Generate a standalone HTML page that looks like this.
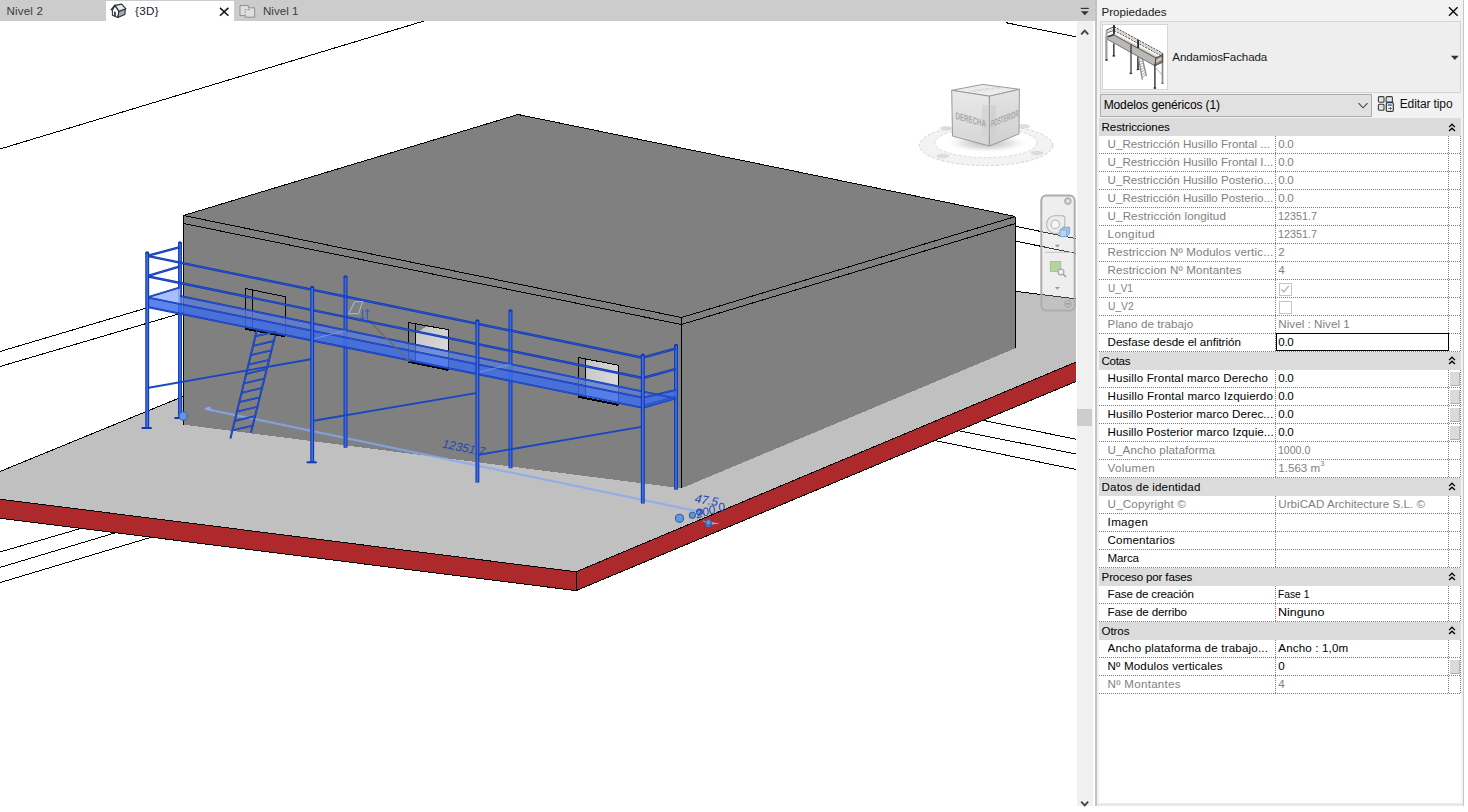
<!DOCTYPE html>
<html><head><meta charset="utf-8"><title>Revit</title>
<style>
html,body{margin:0;padding:0;}
body{width:1468px;height:812px;overflow:hidden;background:#fff;font-family:"Liberation Sans",sans-serif;font-size:11.6px;color:#000;position:relative;}
.abs{position:absolute;}
#tabbar{left:0;top:0;width:1095px;height:21px;background:#cccccc;}
#tabbar .t{position:absolute;top:0;height:21px;line-height:22px;color:#3c3c3c;white-space:nowrap;}
#tab3d{left:106px;top:1px;width:128px;height:20px;background:#fff;}
#view{left:0;top:21px;width:1076px;height:791px;overflow:hidden;background:#fff;}
#view svg{position:absolute;left:0;top:-21px;}
#vscroll{left:1077px;top:21px;width:16px;height:785px;background:#f0f0f0;}
#thumb{left:1077px;top:409px;width:15px;height:16.5px;background:#cdcdcd;}
#split{left:1095px;top:0;width:2px;height:806px;background:#c3c3c3;}
#panel{left:1097px;top:0;width:366px;height:806px;background:#f2f2f2;}
#pr{left:1463px;top:0;width:1.4px;height:806px;background:#c6c6c6;}
#grid{left:1099px;top:118px;width:362px;height:685px;background:#fff;overflow:hidden;}
.hd{position:absolute;left:1099px;width:362px;height:18px;background:#dcdcdc;line-height:18.5px;white-space:nowrap;}
.hd span{position:absolute;left:2.6px;top:0;}
.hd .chev{position:absolute;left:348.8px;top:4.5px;}
.rw{position:absolute;left:1099px;width:362px;height:18px;line-height:15.6px;white-space:nowrap;
  background-image:linear-gradient(90deg,#7c7c7c 50%,transparent 50%);background-size:2px 1px;background-repeat:repeat-x;background-position:0 17px;}
.rw.dis{color:#7f7f7f;}
.rw .nm{position:absolute;left:8.6px;top:0;width:167px;overflow:hidden;}
.rw .vl{position:absolute;left:179.3px;top:0;}
.rw sup{font-size:7.5px;line-height:0;position:relative;top:-1px;vertical-align:super;}
.chk{position:absolute;left:179.8px;top:3.2px;width:11px;height:11px;border:1px solid #c6c6c6;background:#fff;box-sizing:content-box;}
.chk svg{position:absolute;left:.5px;top:.5px;}
.edit{position:absolute;left:176.5px;top:-0.2px;width:171.5px;height:16px;border:1.4px solid #000;box-sizing:content-box;}
.btn{position:absolute;left:351px;top:2px;width:8.5px;height:13px;background:#dadada;border-right:1px solid #b8b8b8;border-bottom:1.5px solid #b0b0b0;box-sizing:content-box;}
.vd{position:absolute;top:135.5px;width:1px;height:558px;background-image:linear-gradient(180deg,#7c7c7c 50%,transparent 50%);background-size:1px 2px;}
</style></head><body>
<div id="tabbar" class="abs">
  <div class="t" style="left:6.5px;letter-spacing:0.168px">Nivel 2</div>
  <div id="tab3d" class="abs"></div>
  <svg class="abs" style="left:104px;top:0px" width="30" height="24" viewBox="0 0 30 24">
    <polygon points="8.4,10.2 11.0,5.6 15.1,11.2 13.7,17.5 8.4,15.3" fill="#fbfbfb" stroke="#2c3038" stroke-width="1.1" stroke-linejoin="round"/>
    <polygon points="15.1,11.2 21.3,9.1 20.9,14.4 13.7,17.5" fill="#a3aab4" stroke="#2c3038" stroke-width="1.1" stroke-linejoin="round"/>
    <polygon points="11.0,5.3 17.6,4.1 21.9,8.8 15.1,11.3" fill="#e6e9ef" stroke="#2c3038" stroke-width="1.2" stroke-linejoin="round"/>
    <path d="M11.0 5.3L7.3 9.7" stroke="#2c3038" stroke-width="1.5" stroke-linecap="round"/>
    <polygon points="10.1,11.6 11.8,12.0 11.8,16.5 10.1,15.8" fill="#2c3038"/>
  </svg>
  <div class="t" style="left:135px;color:#1a1a1a;letter-spacing:0.336px">{3D}</div>
  <svg class="abs" style="left:218px;top:6px" width="12" height="12" viewBox="0 0 12 12"><path d="M2 1.9l8.4 7.8M10.4 1.9L2 9.7" stroke="#111" stroke-width="1.5" fill="none"/></svg>
  <svg class="abs" style="left:239px;top:4px" width="18" height="15" viewBox="0 0 18 15">
    <path d="M1 1.5h8.4v2.3h6.3v9.4H6.2v-1.6H1z" fill="#dedede" stroke="#8f8f8f" stroke-width="1"/>
    <path d="M6.2 11.6V5.6M6.2 5.6h3.2V3.8M9.4 5.6h2.4" fill="none" stroke="#8f8f8f" stroke-width="1" stroke-dasharray="1.5 1.2"/>
  </svg>
  <div class="t" style="left:263px;">Nivel 1</div>
  <svg class="abs" style="left:1079px;top:6px" width="12" height="11" viewBox="0 0 12 11"><path d="M1.8 2.4h8" stroke="#333" stroke-width="1.2"/><path d="M1.9 5.2h7.8L5.8 9.3z" fill="#333"/></svg>
</div>
<div id="view" class="abs">
<svg width="1468" height="812" viewBox="0 0 1468 812">
<defs><linearGradient id="wg" x1="0" y1="0" x2="1" y2="1"><stop offset="0" stop-color="#c4c4c4"/><stop offset="1" stop-color="#e2e2e2"/></linearGradient></defs>
<g shape-rendering="crispEdges">
<line x1="0.0" y1="149.0" x2="430.0" y2="19.2" stroke="#000" stroke-width="1" />
<line x1="1006.0" y1="22.7" x2="1077.0" y2="37.1" stroke="#000" stroke-width="1" />
<line x1="0.0" y1="351.5" x2="147.0" y2="307.9" stroke="#000" stroke-width="1" />
<line x1="0.0" y1="366.5" x2="190.0" y2="310.6" stroke="#000" stroke-width="1" />
<line x1="0.0" y1="552.0" x2="141.0" y2="510.9" stroke="#000" stroke-width="1" />
<line x1="0.0" y1="567.4" x2="176.5" y2="514.5" stroke="#000" stroke-width="1" />
<line x1="0.0" y1="582.6" x2="211.7" y2="519.1" stroke="#000" stroke-width="1" />
<line x1="1000.0" y1="223.1" x2="1077.0" y2="238.9" stroke="#000" stroke-width="1" />
<line x1="1000.0" y1="238.0" x2="1077.0" y2="253.6" stroke="#000" stroke-width="1" />
<line x1="922.6" y1="408.0" x2="1077.0" y2="439.4" stroke="#000" stroke-width="1" />
<line x1="898.8" y1="418.9" x2="1077.0" y2="454.2" stroke="#000" stroke-width="1" />
<line x1="875.0" y1="428.2" x2="1077.0" y2="469.7" stroke="#000" stroke-width="1" />
</g>
<g shape-rendering="crispEdges">
<polygon points="0.0,471.5 183.0,396.5 1015.7,291.3 1077.0,299.0 1077.0,367.6 576.1,577.8 0.0,505.2" fill="#c0c0c0" />
<polygon points="0.0,499.2 576.1,571.8 576.1,590.6 0.0,518.2" fill="#ad292b" />
<polygon points="576.1,571.8 1077.0,361.6 1077.0,381.0 576.1,590.6" fill="#ad292b" />
<line x1="0.0" y1="471.5" x2="183.0" y2="396.5" stroke="#000" stroke-width="1" />
<line x1="1015.7" y1="291.3" x2="1077.0" y2="299.0" stroke="#000" stroke-width="1" />
<line x1="0.0" y1="499.2" x2="576.1" y2="571.8" stroke="#000" stroke-width="1" />
<line x1="576.1" y1="571.8" x2="1077.0" y2="361.6" stroke="#000" stroke-width="1" />
<line x1="0.0" y1="518.2" x2="576.1" y2="590.6" stroke="#000" stroke-width="1" />
<line x1="576.1" y1="590.6" x2="1077.0" y2="381.0" stroke="#000" stroke-width="1" />
<line x1="576.1" y1="571.8" x2="576.1" y2="590.6" stroke="#000" stroke-width="1" />
</g>
<g shape-rendering="crispEdges">
<polygon points="518.0,114.5 1015.5,216.5 1015.5,348.2 681.5,488.3 183.5,424.7 183.5,215.5" fill="#808080" />
<line x1="183.5" y1="215.5" x2="518.0" y2="114.5" stroke="#000" stroke-width="1" />
<line x1="518.0" y1="114.5" x2="1015.5" y2="216.5" stroke="#000" stroke-width="1" />
<line x1="1015.5" y1="216.5" x2="681.5" y2="317.5" stroke="#000" stroke-width="1" />
<line x1="681.5" y1="317.5" x2="183.5" y2="215.5" stroke="#000" stroke-width="1" />
<line x1="183.5" y1="223.5" x2="681.5" y2="324.5" stroke="#000" stroke-width="1" />
<line x1="681.5" y1="324.5" x2="1015.5" y2="223.5" stroke="#000" stroke-width="1" />
<line x1="183.5" y1="215.5" x2="183.5" y2="424.7" stroke="#000" stroke-width="1" />
<line x1="681.5" y1="317.5" x2="681.5" y2="488.3" stroke="#000" stroke-width="1" />
<line x1="1015.5" y1="216.5" x2="1015.5" y2="348.2" stroke="#000" stroke-width="1" />
<line x1="245.5" y1="288.5" x2="285.5" y2="296.8" stroke="#000" stroke-width="1" /><line x1="245.5" y1="288.5" x2="245.5" y2="328.8" stroke="#000" stroke-width="1" /><line x1="252.5" y1="290.0" x2="252.5" y2="330.1" stroke="#000" stroke-width="1" /><line x1="285.5" y1="296.8" x2="285.5" y2="336.4" stroke="#000" stroke-width="1" /><line x1="245.5" y1="328.8" x2="285.5" y2="336.4" stroke="#000" stroke-width="2" />
<polygon points="415.5,333.8 426.0,326.6 448.5,329.7 448.5,369.9 415.5,363.1" fill="url(#wg)" /><line x1="408.5" y1="322.5" x2="448.5" y2="329.7" stroke="#000" stroke-width="1" /><line x1="408.5" y1="322.5" x2="408.5" y2="361.7" stroke="#000" stroke-width="1" /><line x1="415.5" y1="323.8" x2="415.5" y2="363.1" stroke="#000" stroke-width="1" /><line x1="448.5" y1="329.7" x2="448.5" y2="369.9" stroke="#000" stroke-width="1" /><line x1="408.5" y1="361.7" x2="448.5" y2="369.9" stroke="#000" stroke-width="2" />
<polygon points="585.5,358.9 618.5,365.3 618.5,404.9 585.5,398.1" fill="url(#wg)" /><line x1="578.5" y1="357.5" x2="618.5" y2="365.3" stroke="#000" stroke-width="1" /><line x1="578.5" y1="357.5" x2="578.5" y2="396.7" stroke="#000" stroke-width="1" /><line x1="585.5" y1="358.9" x2="585.5" y2="398.1" stroke="#000" stroke-width="1" /><line x1="618.5" y1="365.3" x2="618.5" y2="404.9" stroke="#000" stroke-width="1" /><line x1="578.5" y1="396.7" x2="618.5" y2="404.9" stroke="#000" stroke-width="2" />
</g>
<line x1="205.0" y1="408.8" x2="701.0" y2="512.0" stroke="#86a8f4" stroke-width="2.2" stroke-opacity="0.78"/>
<polygon points="204.0,408.2 210.0,406.5 212.0,410.5" fill="#86a8f4" />
<line x1="180.0" y1="242.5" x2="180.0" y2="417.8" stroke="#1038b2" stroke-width="3.9" /><circle cx="180" cy="243.1" r="1.95" fill="#1038b2"/><line x1="180.0" y1="243.5" x2="180.0" y2="417.8" stroke="#3f6fe4" stroke-width="1.7" />
<line x1="345.5" y1="276.5" x2="345.5" y2="447.8" stroke="#1038b2" stroke-width="3.9" /><circle cx="345.5" cy="277.1" r="1.95" fill="#1038b2"/><line x1="345.5" y1="277.5" x2="345.5" y2="447.8" stroke="#3f6fe4" stroke-width="1.7" />
<line x1="510.5" y1="310.5" x2="510.5" y2="468.2" stroke="#1038b2" stroke-width="3.9" /><circle cx="510.5" cy="311.1" r="1.95" fill="#1038b2"/><line x1="510.5" y1="311.5" x2="510.5" y2="468.2" stroke="#3f6fe4" stroke-width="1.7" />
<line x1="676.0" y1="345.0" x2="676.0" y2="489.6" stroke="#1038b2" stroke-width="3.9" /><circle cx="676" cy="345.6" r="1.95" fill="#1038b2"/><line x1="676.0" y1="346.0" x2="676.0" y2="489.6" stroke="#3f6fe4" stroke-width="1.7" />
<polygon points="180.0,296.0 643.0,390.3 657.0,394.3 643.0,397.7 180.0,303.9" fill="rgba(93,124,212,0.80)" />
<polygon points="147.2,297.3 180.0,287.3 180.0,303.9" fill="rgba(150,180,250,0.85)" />
<polygon points="147.2,297.3 642.8,397.7 642.8,407.8 147.2,307.0" fill="rgba(61,109,232,0.84)" />
<polygon points="642.8,397.7 676.0,389.8 676.0,398.5 642.8,407.8" fill="rgba(61,109,232,0.84)" />
<line x1="180.0" y1="296.0" x2="676.0" y2="398.3" stroke="#1038b2" stroke-width="1.8" /><line x1="180.0" y1="296.0" x2="676.0" y2="398.3" stroke="#3360d8" stroke-width="0.7" />
<line x1="147.2" y1="297.3" x2="642.8" y2="397.7" stroke="#1038b2" stroke-width="1.8" /><line x1="147.2" y1="297.3" x2="642.8" y2="397.7" stroke="#3360d8" stroke-width="0.7" />
<line x1="147.2" y1="307.0" x2="642.8" y2="407.8" stroke="#1038b2" stroke-width="1.8" /><line x1="147.2" y1="307.0" x2="642.8" y2="407.8" stroke="#3360d8" stroke-width="0.7" />
<line x1="147.2" y1="297.3" x2="180.0" y2="287.3" stroke="#1038b2" stroke-width="1.8" /><line x1="147.2" y1="297.3" x2="180.0" y2="287.3" stroke="#3360d8" stroke-width="0.7" />
<line x1="642.8" y1="397.7" x2="676.0" y2="389.8" stroke="#1038b2" stroke-width="1.8" /><line x1="642.8" y1="397.7" x2="676.0" y2="389.8" stroke="#3360d8" stroke-width="0.7" />
<line x1="642.8" y1="407.8" x2="676.0" y2="398.5" stroke="#1038b2" stroke-width="1.8" /><line x1="642.8" y1="407.8" x2="676.0" y2="398.5" stroke="#3360d8" stroke-width="0.7" />
<line x1="642.8" y1="405.5" x2="676.0" y2="396.5" stroke="#1038b2" stroke-width="1.2" /><line x1="642.8" y1="405.5" x2="676.0" y2="396.5" stroke="#3360d8" stroke-width="0.7" />
<line x1="368.5" y1="320.0" x2="409.8" y2="361.8" stroke="#6a6a6a" stroke-width="1.5" stroke-opacity="0.9"/>
<line x1="312.2" y1="339.1" x2="345.5" y2="330.7" stroke="#86a2e6" stroke-width="1" stroke-opacity="0.75"/>
<line x1="477.4" y1="372.7" x2="510.5" y2="364.3" stroke="#86a2e6" stroke-width="1" stroke-opacity="0.75"/>
<line x1="147.2" y1="255.9" x2="642.8" y2="357.7" stroke="#1038b2" stroke-width="2.4" /><line x1="147.2" y1="255.9" x2="642.8" y2="357.7" stroke="#3360d8" stroke-width="0.7" />
<line x1="147.2" y1="276.2" x2="642.8" y2="378.0" stroke="#1038b2" stroke-width="2.4" /><line x1="147.2" y1="276.2" x2="642.8" y2="378.0" stroke="#3360d8" stroke-width="0.7" />
<line x1="147.2" y1="255.9" x2="180.0" y2="247.2" stroke="#1038b2" stroke-width="2.4" /><line x1="147.2" y1="255.9" x2="180.0" y2="247.2" stroke="#3360d8" stroke-width="0.7" />
<line x1="147.2" y1="276.2" x2="180.0" y2="266.3" stroke="#1038b2" stroke-width="2.4" /><line x1="147.2" y1="276.2" x2="180.0" y2="266.3" stroke="#3360d8" stroke-width="0.7" />
<line x1="642.8" y1="357.7" x2="676.0" y2="348.5" stroke="#1038b2" stroke-width="2.4" /><line x1="642.8" y1="357.7" x2="676.0" y2="348.5" stroke="#3360d8" stroke-width="0.7" />
<line x1="642.8" y1="378.0" x2="676.0" y2="368.8" stroke="#1038b2" stroke-width="2.4" /><line x1="642.8" y1="378.0" x2="676.0" y2="368.8" stroke="#3360d8" stroke-width="0.7" />
<line x1="147.2" y1="388.0" x2="312.2" y2="359.0" stroke="#1848c0" stroke-width="1.8" />
<line x1="312.2" y1="421.0" x2="477.4" y2="392.8" stroke="#1848c0" stroke-width="1.8" />
<line x1="477.4" y1="455.0" x2="642.8" y2="426.6" stroke="#1848c0" stroke-width="1.8" />
<line x1="256.8" y1="330.4" x2="230.4" y2="438.4" stroke="#1038b2" stroke-width="2" /><line x1="256.8" y1="330.4" x2="230.4" y2="438.4" stroke="#3360d8" stroke-width="0.7" />
<line x1="275.2" y1="335.2" x2="250.9" y2="432.8" stroke="#1038b2" stroke-width="2" /><line x1="275.2" y1="335.2" x2="250.9" y2="432.8" stroke="#3360d8" stroke-width="0.7" />
<line x1="232.4" y1="430.4" x2="252.7" y2="425.6" stroke="#1038b2" stroke-width="1.8" /><line x1="232.4" y1="430.4" x2="252.7" y2="425.6" stroke="#3360d8" stroke-width="0.7" />
<line x1="234.7" y1="421.0" x2="255.0" y2="416.2" stroke="#1038b2" stroke-width="1.8" /><line x1="234.7" y1="421.0" x2="255.0" y2="416.2" stroke="#3360d8" stroke-width="0.7" />
<line x1="237.0" y1="411.6" x2="257.4" y2="406.8" stroke="#1038b2" stroke-width="1.8" /><line x1="237.0" y1="411.6" x2="257.4" y2="406.8" stroke="#3360d8" stroke-width="0.7" />
<line x1="239.2" y1="402.2" x2="259.7" y2="397.4" stroke="#1038b2" stroke-width="1.8" /><line x1="239.2" y1="402.2" x2="259.7" y2="397.4" stroke="#3360d8" stroke-width="0.7" />
<line x1="241.5" y1="392.8" x2="262.1" y2="388.0" stroke="#1038b2" stroke-width="1.8" /><line x1="241.5" y1="392.8" x2="262.1" y2="388.0" stroke="#3360d8" stroke-width="0.7" />
<line x1="243.8" y1="383.4" x2="264.4" y2="378.6" stroke="#1038b2" stroke-width="1.8" /><line x1="243.8" y1="383.4" x2="264.4" y2="378.6" stroke="#3360d8" stroke-width="0.7" />
<line x1="246.1" y1="374.0" x2="266.7" y2="369.2" stroke="#1038b2" stroke-width="1.8" /><line x1="246.1" y1="374.0" x2="266.7" y2="369.2" stroke="#3360d8" stroke-width="0.7" />
<line x1="248.4" y1="364.6" x2="269.1" y2="359.8" stroke="#1038b2" stroke-width="1.8" /><line x1="248.4" y1="364.6" x2="269.1" y2="359.8" stroke="#3360d8" stroke-width="0.7" />
<line x1="250.7" y1="355.2" x2="271.4" y2="350.4" stroke="#1038b2" stroke-width="1.8" /><line x1="250.7" y1="355.2" x2="271.4" y2="350.4" stroke="#3360d8" stroke-width="0.7" />
<line x1="253.0" y1="345.8" x2="273.8" y2="341.0" stroke="#1038b2" stroke-width="1.8" /><line x1="253.0" y1="345.8" x2="273.8" y2="341.0" stroke="#3360d8" stroke-width="0.7" />
<line x1="255.3" y1="336.4" x2="276.1" y2="331.6" stroke="#1038b2" stroke-width="1.8" /><line x1="255.3" y1="336.4" x2="276.1" y2="331.6" stroke="#3360d8" stroke-width="0.7" />
<line x1="147.2" y1="252.5" x2="147.2" y2="427.8" stroke="#1038b2" stroke-width="3.9" /><circle cx="147.2" cy="253.1" r="1.95" fill="#1038b2"/><line x1="147.2" y1="253.5" x2="147.2" y2="427.8" stroke="#3f6fe4" stroke-width="1.7" />
<line x1="312.2" y1="287.0" x2="312.2" y2="462.0" stroke="#1038b2" stroke-width="3.9" /><circle cx="312.2" cy="287.6" r="1.95" fill="#1038b2"/><line x1="312.2" y1="288.0" x2="312.2" y2="462.0" stroke="#3f6fe4" stroke-width="1.7" />
<line x1="477.4" y1="320.5" x2="477.4" y2="482.6" stroke="#1038b2" stroke-width="3.9" /><circle cx="477.4" cy="321.1" r="1.95" fill="#1038b2"/><line x1="477.4" y1="321.5" x2="477.4" y2="482.6" stroke="#3f6fe4" stroke-width="1.7" />
<line x1="642.8" y1="354.8" x2="642.8" y2="503.5" stroke="#1038b2" stroke-width="3.9" /><circle cx="642.8" cy="355.40000000000003" r="1.95" fill="#1038b2"/><line x1="642.8" y1="355.8" x2="642.8" y2="503.5" stroke="#3f6fe4" stroke-width="1.7" />
<line x1="141.7" y1="428.0" x2="151.7" y2="428.0" stroke="#1038b2" stroke-width="2" />
<line x1="174.5" y1="418.0" x2="184.5" y2="418.0" stroke="#1038b2" stroke-width="2" />
<line x1="306.7" y1="462.3" x2="316.7" y2="462.3" stroke="#1038b2" stroke-width="2" />
<polygon points="354.7,301.7 362.6,301.7 358.6,313.6 348.8,313.6" fill="none" stroke="#8fb4e0" stroke-width="1.2"/>
<path d="M362.6 309.5V319.5M360.6 317.3l2 2.4 2-2.4M367.4 319.5V309.5M365.4 311.8l2-2.4 2 2.4" stroke="#2a5bc4" stroke-width="1" fill="none"/>
<text x="441.8" y="447.6" transform="rotate(11 441.8 447.6)" font-family="Liberation Sans, sans-serif" font-style="italic" font-size="12" fill="#1f45b8">12351.7</text>
<text x="694.3" y="502.3" transform="rotate(9.5 694.3 502.3)" font-family="Liberation Sans, sans-serif" font-style="italic" font-size="12" fill="#1f45b8">47.5</text>
<polygon points="702.0,520.6 720.0,523.4 709.0,525.0" fill="#a9a0e4" />
<circle cx="183.2" cy="416" r="4.2" fill="#5e98e2" stroke="#3b5f9e" stroke-width="1.1"/>
<circle cx="679.5" cy="518.3" r="4.1" fill="#5e98e2" stroke="#3b5f9e" stroke-width="1.1"/>
<circle cx="692.4" cy="515.2" r="3" fill="#5e98e2" stroke="#3b5f9e" stroke-width="1.1"/>
<circle cx="699.5" cy="512.1" r="3" fill="#5e98e2" stroke="#3b5f9e" stroke-width="1.1"/>
<circle cx="708.4" cy="524.2" r="2.8" fill="#5e98e2" stroke="#3b5f9e" stroke-width="1.1"/>
<circle cx="708.4" cy="522.4" r="2.8" fill="#5e98e2" stroke="#3b5f9e" stroke-width="1.1"/>
<text x="697" y="518.6" transform="rotate(-16.5 697 518.6)" font-family="Liberation Sans, sans-serif" font-style="italic" font-size="12" fill="#1f45b8">200.0</text>
<defs><radialGradient id="shd"><stop offset="0" stop-color="#9a9a9a" stop-opacity=".75"/><stop offset=".6" stop-color="#c8c8c8" stop-opacity=".45"/><stop offset="1" stop-color="#fff" stop-opacity="0"/></radialGradient><linearGradient id="fL" x1="0" y1="0" x2="0" y2="1"><stop offset="0" stop-color="#e9e9e9"/><stop offset="1" stop-color="#d6d6d6"/></linearGradient><linearGradient id="fR" x1="0" y1="0" x2="0" y2="1"><stop offset="0" stop-color="#e4e4e4"/><stop offset="1" stop-color="#cfcfcf"/></linearGradient></defs>
<ellipse cx="986" cy="145.3" rx="66.7" ry="20.3" fill="#f3f3f3" stroke="#d2d2d2" stroke-width="1" stroke-dasharray="3 2"/>
<ellipse cx="986" cy="142.8" rx="51" ry="14.8" fill="#fff" stroke="#dcdcdc" stroke-width="1" stroke-dasharray="3 2"/>
<ellipse cx="987" cy="143" rx="42" ry="10" fill="url(#shd)"/>
<ellipse cx="946" cy="128.3" rx="6.5" ry="2.2" fill="#d6d6d6" opacity=".8"/>
<ellipse cx="1024" cy="126.3" rx="6.5" ry="2.2" fill="#d6d6d6" opacity=".8"/>
<ellipse cx="943" cy="156" rx="6.5" ry="2.2" fill="#d6d6d6" opacity=".8"/>
<ellipse cx="1037" cy="153" rx="6.5" ry="2.2" fill="#d6d6d6" opacity=".8"/>
<polygon points="951.7,90.3 982.8,84.4 1019.4,89.3 989.4,96.2" fill="#ececec" stroke="#9a9a9a" stroke-width="1"/>
<polygon points="951.7,90.3 989.4,96.2 989.4,146 952.5,136.1" fill="url(#fL)" stroke="#9a9a9a" stroke-width="1"/>
<polygon points="989.4,96.2 1019.4,89.3 1019,133.9 989.4,146" fill="url(#fR)" stroke="#9a9a9a" stroke-width="1"/>
<rect x="982" y="105" width="6" height="32" fill="#d2d2d2" opacity=".7"/><rect x="991" y="105" width="5" height="30" fill="#cdcdcd" opacity=".7"/>
<text transform="matrix(1 .27 0 1 955.5 112)" font-family="Liberation Sans, sans-serif" font-weight="bold" font-size="10" fill="#a6a6a6" textLength="30.5" lengthAdjust="spacingAndGlyphs" x="0" y="7">DERECHA</text>
<text transform="matrix(1 -.40 0 1 991 127.5)" font-family="Liberation Sans, sans-serif" font-weight="bold" font-size="10" fill="#a6a6a6" textLength="27.5" lengthAdjust="spacingAndGlyphs" x="0" y="0">POSTERIOR</text>
<text transform="matrix(1 -.12 .9 .35 972 92)" font-family="Liberation Sans, sans-serif" font-size="6" fill="#c4c4c4" x="0" y="0">SUPERIOR</text>
<rect x="1041.3" y="195.6" width="33.4" height="114.8" rx="5" ry="5" fill="rgba(200,200,200,0.3)" stroke="#adadad" stroke-width="2"/>
<circle cx="1067.9" cy="201.1" r="3.3" fill="#c6c6c6" stroke="#a6a6a6" stroke-width="1"/><path d="M1066.4 199.6l3 3M1069.4 199.6l-3 3" stroke="#f4f4f4" stroke-width="1"/>
<circle cx="1067.9" cy="303.9" r="3.3" fill="#c6c6c6" stroke="#a0a0a0" stroke-width="1"/><path d="M1066 303.9h3.8" stroke="#8a8a8a" stroke-width="1.2"/>
<path d="M1046.5 224.4a8.8 8.8 0 0 1 8.8-8.8h6.5a3 3 0 0 1 3 3v5.8a9.2 9.2 0 0 1-9.2 9.2a9.1 9.1 0 0 1-9.1-9.2z" fill="#ececec" stroke="#bdbdbd" stroke-width="1.3"/>
<circle cx="1055.3" cy="224.4" r="4.2" fill="#f6f6f6" stroke="#bdbdbd" stroke-width="1.2"/>
<polygon points="1060,230 1063,227.2 1069.6,227.2 1069.6,233.6 1066.6,236.6 1060,236.6" fill="#9ec0ea" stroke="#6f9ad2" stroke-width="0.8"/><polygon points="1060,230 1066.6,230 1066.6,236.6 1060,236.6" fill="#b9d3f2" stroke="#6f9ad2" stroke-width="0.6"/>
<polygon points="1054.9,244.8 1059.9,244.8 1057.4,247.6" fill="#9a9a9a"/>
<line x1="1045" y1="252.3" x2="1072" y2="252.3" stroke="#c4c4c4" stroke-width="1"/>
<rect x="1050.3" y="261.5" width="10.5" height="10" fill="#b4d3a0" stroke="#9cc088" stroke-width="0.8"/>
<circle cx="1061" cy="272" r="2.9" fill="#efefef" stroke="#a8a8a8" stroke-width="1.2"/><line x1="1063.2" y1="274.2" x2="1066" y2="277" stroke="#a0a0a0" stroke-width="1.6"/>
<polygon points="1054.9,287 1059.9,287 1057.4,289.8" fill="#9a9a9a"/>
</svg>
</div>
<div id="vscroll" class="abs"></div>
<div id="thumb" class="abs"></div>
<svg class="abs" style="left:1079px;top:27px" width="12" height="10" viewBox="0 0 12 10"><path d="M2.2 7.4L5.7 3.7 9.2 7.4" fill="none" stroke="#444" stroke-width="1.9"/></svg>
<svg class="abs" style="left:1079px;top:798.6px" width="12" height="10" viewBox="0 0 12 10"><path d="M2.2 2.6L5.7 6.3 9.2 2.6" fill="none" stroke="#444" stroke-width="1.9"/></svg>
<div id="split" class="abs"></div>
<div id="panel" class="abs"></div>
<div id="pr" class="abs"></div>
<div class="abs" style="left:1101.5px;top:4px;line-height:15px;color:#1a1a1a">Propiedades</div>
<svg class="abs" style="left:1447px;top:5px" width="13" height="13" viewBox="0 0 13 13"><path d="M2 2.2l8.6 8.6M10.6 2.2L2 10.8" stroke="#111" stroke-width="1.5" fill="none"/></svg>
<div class="abs" style="left:1099.5px;top:21px;width:359px;height:69.5px;border:1px solid #d4d4d4;background:#eeeeee;box-sizing:content-box"></div>
<div class="abs" style="left:1101.7px;top:23.7px;width:64.5px;height:64px;border:1px solid #d6d6d6;background:#fff;box-sizing:content-box"></div>
<svg class="abs" style="left:1102.4px;top:24.4px" width="65" height="65" viewBox="0 0 65 65">
<line x1="11.8" y1="19.5" x2="11.8" y2="31.9" stroke="#3a3a3a" stroke-width="1.5" />
<ellipse cx="11.8" cy="31.9" rx="1.5" ry=".8" fill="#333"/>
<line x1="36.0" y1="32.6" x2="36.0" y2="45.5" stroke="#2e2e2e" stroke-width="1.6" />
<ellipse cx="36.0" cy="45.5" rx="1.5" ry=".8" fill="#333"/>
<line x1="60.5" y1="30.7" x2="60.5" y2="59.3" stroke="#8a8a8a" stroke-width="1.7" />
<ellipse cx="60.5" cy="59.3" rx="1.5" ry=".8" fill="#777"/>
<line x1="36.2" y1="32.6" x2="40.4" y2="55.6" stroke="#8a8a8a" stroke-width="1.3" />
<line x1="39.9" y1="32.6" x2="44.4" y2="52.1" stroke="#8a8a8a" stroke-width="1.3" />
<line x1="36.8" y1="35.3" x2="40.7" y2="34.4" stroke="#9c9c9c" stroke-width="0.9" />
<line x1="37.3" y1="37.9" x2="41.1" y2="36.7" stroke="#9c9c9c" stroke-width="0.9" />
<line x1="37.8" y1="40.5" x2="41.6" y2="39.0" stroke="#9c9c9c" stroke-width="0.9" />
<line x1="38.2" y1="43.1" x2="42.1" y2="41.3" stroke="#9c9c9c" stroke-width="0.9" />
<line x1="38.7" y1="45.7" x2="42.5" y2="43.6" stroke="#9c9c9c" stroke-width="0.9" />
<line x1="39.2" y1="48.3" x2="43.0" y2="45.9" stroke="#9c9c9c" stroke-width="0.9" />
<line x1="39.7" y1="50.8" x2="43.5" y2="48.3" stroke="#9c9c9c" stroke-width="0.9" />
<line x1="40.2" y1="53.4" x2="43.9" y2="50.6" stroke="#9c9c9c" stroke-width="0.9" />
<line x1="12.0" y1="2.8" x2="60.6" y2="29.3" stroke="#3c3c3c" stroke-width="1.0" stroke-dasharray="2.2 1"/>
<line x1="12.0" y1="6.4" x2="60.6" y2="32.5" stroke="#4a4a4a" stroke-width="1.0" stroke-dasharray="2.2 1"/>
<line x1="12.0" y1="4.6" x2="60.6" y2="30.9" stroke="#cfcfcf" stroke-width="1.4" />
<line x1="4.6" y1="5.9" x2="12.0" y2="2.8" stroke="#555" stroke-width="1.0" />
<line x1="4.6" y1="9.0" x2="12.0" y2="6.4" stroke="#666" stroke-width="1.0" />
<line x1="4.6" y1="7.5" x2="12.0" y2="4.6" stroke="#cfcfcf" stroke-width="1.2" />
<polygon points="12.0,9.2 57.4,33.1 56.8,35.8 11.5,11.4" fill="#d6cbbd" />
<line x1="12.0" y1="9.2" x2="57.4" y2="33.1" stroke="#f0ebe4" stroke-width="1.0" />
<line x1="11.7" y1="11.4" x2="56.8" y2="35.8" stroke="#6e5a48" stroke-width="1.1" />
<polygon points="5.3,13.1 11.8,11.1 53.8,34.0 52.9,41.9 5.3,15.3" fill="#b9b9b9" stroke="#4a4a4a" stroke-width="0.7"/>
<line x1="5.0" y1="12.9" x2="12.0" y2="10.5" stroke="#3a3028" stroke-width="1.4" />
<polygon points="53.8,33.8 60.4,30.8 60.4,38.4 53.1,41.7" fill="#8c7f74" stroke="#3a3028" stroke-width="0.7"/>
<polygon points="54.4,35.5 59.7,33.0 59.7,36.1 54.1,39.0" fill="#cfc8c0" />
<line x1="12.0" y1="1.1" x2="12.0" y2="10.3" stroke="#1e1e1e" stroke-width="1.7" />
<line x1="36.1" y1="15.7" x2="36.1" y2="24.1" stroke="#1e1e1e" stroke-width="1.7" />
<line x1="60.4" y1="29.0" x2="60.4" y2="33.7" stroke="#555" stroke-width="1.5" />
<line x1="4.6" y1="5.9" x2="4.6" y2="36.1" stroke="#a8a8a8" stroke-width="2.0" />
<line x1="3.8" y1="12.4" x2="3.8" y2="35.5" stroke="#8a8a8a" stroke-width="0.7" />
<ellipse cx="4.5" cy="36.1" rx="1.5" ry=".8" fill="#2a2a2a"/>
<line x1="29.0" y1="20.5" x2="29.0" y2="49.2" stroke="#3c3c3c" stroke-width="1.3" />
<ellipse cx="28.9" cy="49.4" rx="1.5" ry=".8" fill="#444"/>
<line x1="52.9" y1="39.9" x2="52.9" y2="64.0" stroke="#4a4a4a" stroke-width="1.6" />
<ellipse cx="52.9" cy="64.1" rx="1.5" ry=".8" fill="#222"/>
<line x1="53.6" y1="43.6" x2="60.3" y2="51.0" stroke="#9a9a9a" stroke-width="0.8" />
</svg>
<div class="abs" style="left:1172.3px;top:49.2px;line-height:15px;color:#1a1a1a;letter-spacing:-0.123px">AndamiosFachada</div>
<svg class="abs" style="left:1450px;top:55px" width="10" height="6" viewBox="0 0 10 6"><path d="M.8 .8h8L4.8 5z" fill="#333"/></svg>
<div class="abs" style="left:1099.5px;top:94px;width:270px;height:21px;border:1px solid #adadad;background:#e1e1e1;box-sizing:content-box"></div>
<div class="abs" style="left:1103.7px;top:98.2px;line-height:15px;font-size:12px;letter-spacing:-0.122px">Modelos genéricos (1)</div>
<svg class="abs" style="left:1357px;top:101px" width="12" height="9" viewBox="0 0 12 9"><path d="M1.5 2.2L6 6.8 10.5 2.2" fill="none" stroke="#444" stroke-width="1.1"/></svg>
<svg class="abs" style="left:1377px;top:95px" width="18" height="18" viewBox="0 0 18 18">
  <rect x="1.4" y="1.6" width="5.6" height="5.6" rx="1" fill="#e4e4e4" stroke="#3a3a3a" stroke-width="1.1"/>
  <rect x="1.4" y="9.2" width="5.6" height="6" rx="1" fill="#e4e4e4" stroke="#3a3a3a" stroke-width="1.1"/>
  <path d="M9.2 7V2.6a1 1 0 0 1 1-1h4.2a1 1 0 0 1 1 1V7z" fill="#e4e4e4" stroke="#3a3a3a" stroke-width="1.1"/>
  <rect x="9.3" y="7.6" width="7" height="8.8" rx="1.2" fill="#fcfcfc" stroke="#2e3440" stroke-width="1.2"/>
  <path d="M10.8 10.1h4" stroke="#2b62b8" stroke-width="1.5"/><path d="M11 13.4h3.4M13.2 12.2l1.3 1.2-1.3 1.2" stroke="#2e3440" stroke-width=".8" fill="none"/>
</svg>
<div class="abs" style="left:1399.7px;top:96.7px;line-height:15px;font-size:12px;color:#111;letter-spacing:-0.113px">Editar tipo</div>
<div id="grid" class="abs"></div>
<div class="abs" style="left:1097px;top:803px;width:366px;height:3px;background:#e9e9e9"></div>
<div class="vd" style="left:1275px"></div>
<div class="vd" style="left:1448px"></div>
<div class="vd" style="left:1460px"></div>
<div class="hd" style="top:118px"><span style="letter-spacing:-0.116px">Restricciones</span><svg class="chev" width="8" height="9" viewBox="0 0 9 10"><path d="M1.2 4.6L4.5 1.4 7.8 4.6M1.2 9L4.5 5.8 7.8 9" fill="none" stroke="#000" stroke-width="1.5"/></svg></div>
<div class="rw dis" style="top:135.5px"><span class="nm" style="">U_Restricción Husillo Frontal ...</span><span class="vl" style="letter-spacing:-0.335px">0.0</span></div>
<div class="rw dis" style="top:153.5px"><span class="nm" style="">U_Restricción Husillo Frontal I...</span><span class="vl" style="letter-spacing:-0.335px">0.0</span></div>
<div class="rw dis" style="top:171.5px"><span class="nm" style="">U_Restricción Husillo Posterio...</span><span class="vl" style="letter-spacing:-0.335px">0.0</span></div>
<div class="rw dis" style="top:189.5px"><span class="nm" style="">U_Restricción Husillo Posterio...</span><span class="vl" style="letter-spacing:-0.335px">0.0</span></div>
<div class="rw dis" style="top:207.5px"><span class="nm" style="letter-spacing:0.107px">U_Restricción longitud</span><span class="vl" style="transform:scaleX(0.933);transform-origin:0 50%">12351.7</span></div>
<div class="rw dis" style="top:225.5px"><span class="nm" style="letter-spacing:0.381px">Longitud</span><span class="vl" style="transform:scaleX(0.933);transform-origin:0 50%">12351.7</span></div>
<div class="rw dis" style="top:243.5px"><span class="nm" style="letter-spacing:0.152px">Restriccion Nº Modulos vertic...</span><span class="vl" style="">2</span></div>
<div class="rw dis" style="top:261.5px"><span class="nm" style="letter-spacing:0.151px">Restriccion Nº Montantes</span><span class="vl" style="">4</span></div>
<div class="rw dis" style="top:279.5px"><span class="nm" style="transform:scaleX(0.858);transform-origin:0 50%">U_V1</span><span class="vl" style=""></span><span class="chk"><svg width="10" height="10" viewBox="0 0 10 10"><path d="M1.3 5.2l2.6 2.7 4.9-6" fill="none" stroke="#b5b5b5" stroke-width="1.4"/></svg></span></div>
<div class="rw dis" style="top:297.5px"><span class="nm" style="transform:scaleX(0.883);transform-origin:0 50%">U_V2</span><span class="vl" style=""></span><span class="chk"></span></div>
<div class="rw dis" style="top:315.5px"><span class="nm" style="letter-spacing:0.074px">Plano de trabajo</span><span class="vl" style="letter-spacing:0.041px">Nivel : Nivel 1</span></div>
<div class="rw" style="top:333.5px"><span class="nm" style="letter-spacing:-0.032px">Desfase desde el anfitrión</span><span class="vl" style="letter-spacing:-0.335px">0.0</span><span class="edit"></span></div>
<div class="hd" style="top:351.5px"><span style="letter-spacing:-0.347px">Cotas</span><svg class="chev" width="8" height="9" viewBox="0 0 9 10"><path d="M1.2 4.6L4.5 1.4 7.8 4.6M1.2 9L4.5 5.8 7.8 9" fill="none" stroke="#000" stroke-width="1.5"/></svg></div>
<div class="rw" style="top:369.5px"><span class="nm" style="letter-spacing:0.131px">Husillo Frontal marco Derecho</span><span class="vl" style="letter-spacing:-0.335px">0.0</span><span class="btn"></span></div>
<div class="rw" style="top:387.5px"><span class="nm" style="letter-spacing:0.160px">Husillo Frontal marco Izquierdo</span><span class="vl" style="letter-spacing:-0.335px">0.0</span><span class="btn"></span></div>
<div class="rw" style="top:405.5px"><span class="nm" style="letter-spacing:0.060px">Husillo Posterior marco Derec...</span><span class="vl" style="letter-spacing:-0.335px">0.0</span><span class="btn"></span></div>
<div class="rw" style="top:423.5px"><span class="nm" style="letter-spacing:0.074px">Husillo Posterior marco Izquie...</span><span class="vl" style="letter-spacing:-0.335px">0.0</span><span class="btn"></span></div>
<div class="rw dis" style="top:441.5px"><span class="nm" style="letter-spacing:0.103px">U_Ancho plataforma</span><span class="vl" style="transform:scaleX(0.911);transform-origin:0 50%">1000.0</span></div>
<div class="rw dis" style="top:459.5px"><span class="nm" style="letter-spacing:0.338px">Volumen</span><span class="vl" style="">1.563 m<sup>3</sup></span></div>
<div class="hd" style="top:477.5px"><span style="letter-spacing:0.121px">Datos de identidad</span><svg class="chev" width="8" height="9" viewBox="0 0 9 10"><path d="M1.2 4.6L4.5 1.4 7.8 4.6M1.2 9L4.5 5.8 7.8 9" fill="none" stroke="#000" stroke-width="1.5"/></svg></div>
<div class="rw dis" style="top:495.5px"><span class="nm" style="letter-spacing:0.162px">U_Copyright ©</span><span class="vl" style="letter-spacing:0.039px">UrbiCAD Architecture S.L. ©</span></div>
<div class="rw" style="top:513.5px"><span class="nm" style="letter-spacing:0.316px">Imagen</span><span class="vl" style=""></span></div>
<div class="rw" style="top:531.5px"><span class="nm" style="letter-spacing:0.147px">Comentarios</span><span class="vl" style=""></span></div>
<div class="rw" style="top:549.5px"><span class="nm" style="letter-spacing:-0.191px">Marca</span><span class="vl" style=""></span></div>
<div class="hd" style="top:567.5px"><span style="letter-spacing:-0.165px">Proceso por fases</span><svg class="chev" width="8" height="9" viewBox="0 0 9 10"><path d="M1.2 4.6L4.5 1.4 7.8 4.6M1.2 9L4.5 5.8 7.8 9" fill="none" stroke="#000" stroke-width="1.5"/></svg></div>
<div class="rw" style="top:585.5px"><span class="nm" style="letter-spacing:-0.179px">Fase de creación</span><span class="vl" style="transform:scaleX(0.886);transform-origin:0 50%">Fase 1</span></div>
<div class="rw" style="top:603.5px"><span class="nm" style="letter-spacing:-0.125px">Fase de derribo</span><span class="vl" style="transform:scaleX(1.074);transform-origin:0 50%">Ninguno</span></div>
<div class="hd" style="top:621.5px"><span style="letter-spacing:-0.112px">Otros</span><svg class="chev" width="8" height="9" viewBox="0 0 9 10"><path d="M1.2 4.6L4.5 1.4 7.8 4.6M1.2 9L4.5 5.8 7.8 9" fill="none" stroke="#000" stroke-width="1.5"/></svg></div>
<div class="rw" style="top:639.5px"><span class="nm" style="letter-spacing:0.172px">Ancho plataforma de trabajo...</span><span class="vl" style="letter-spacing:0.141px">Ancho : 1,0m</span></div>
<div class="rw" style="top:657.5px"><span class="nm" style="letter-spacing:0.153px">Nº Modulos verticales</span><span class="vl" style="">0</span><span class="btn"></span></div>
<div class="rw dis" style="top:675.5px"><span class="nm" style="letter-spacing:0.276px">Nº Montantes</span><span class="vl" style="">4</span></div>
</body></html>
